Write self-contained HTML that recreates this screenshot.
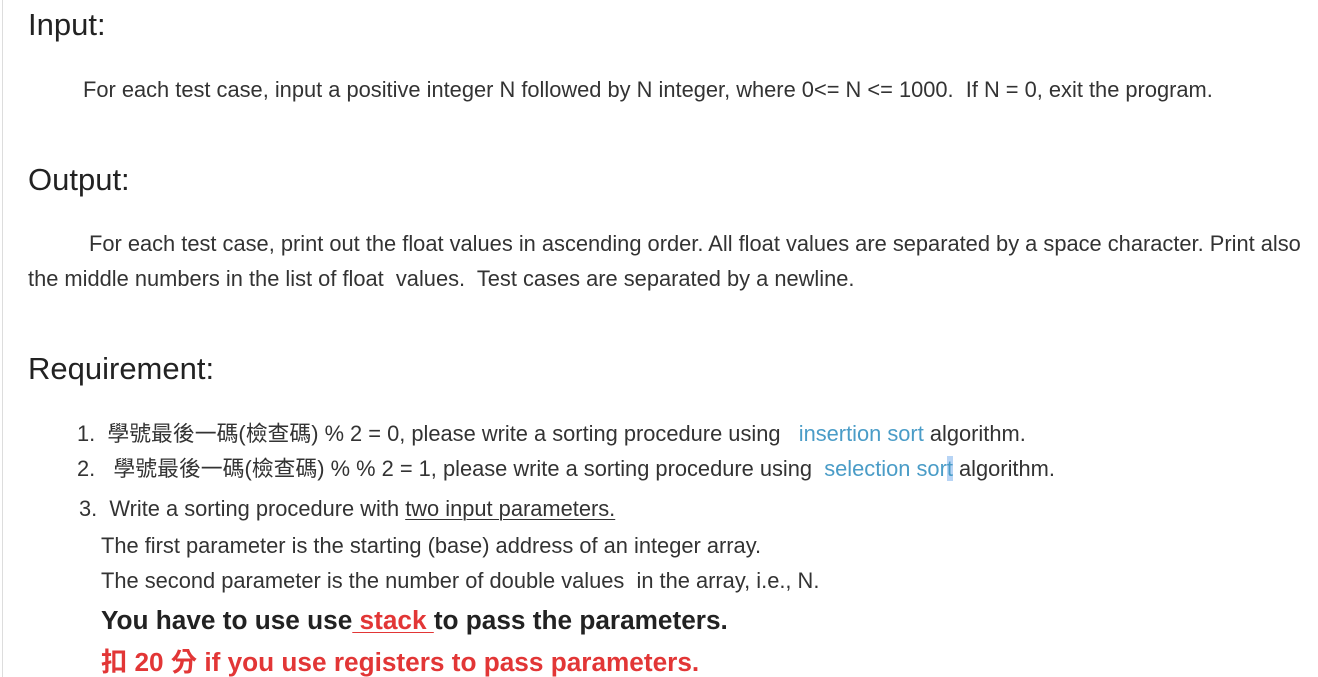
<!DOCTYPE html>
<html><head><meta charset="utf-8"><style>
body{margin:0;width:1318px;height:677px;overflow:hidden;background:#fff;font-family:"Liberation Sans","Noto Sans CJK TC",sans-serif;color:#333;position:relative}
.bl{position:absolute;left:2px;top:0;width:1px;height:677px;background:#ddd}
.t{position:absolute;white-space:nowrap;font-size:21.85px;line-height:26px}
.h{position:absolute;font-size:31px;line-height:36px;color:#222}
.b{color:#4a9cc7}
.r{color:#e23636}
u{text-decoration-thickness:1px;text-underline-offset:3px}
</style></head><body>
<div class="bl"></div>
<div class="h" style="left:28px;top:7px">Input:</div>
<div class="t" style="left:83px;top:77px">For each test case, input a positive integer N followed by N integer, where 0&lt;= N &lt;= 1000.&nbsp; If N = 0, exit the program.</div>
<div class="h" style="left:28px;top:162px">Output:</div>
<div class="t" style="left:89px;top:231px">For each test case, print out the float values in ascending order. All float values are separated by a space character. Print also</div>
<div class="t" style="left:28px;top:266px">the middle numbers in the list of float&nbsp; values.&nbsp; Test cases are separated by a newline.</div>
<div class="h" style="left:28px;top:351px">Requirement:</div>
<div class="t" style="left:77px;top:421px">1.&nbsp; 學號最後一碼(檢查碼) % 2 = 0, please write a sorting procedure using &nbsp; <span class="b">insertion sort</span> algorithm.</div>
<div class="t" style="left:77px;top:456px">2. &nbsp; 學號最後一碼(檢查碼) % % 2 = 1, please write a sorting procedure using &nbsp;<span class="b">selection sor<span style="background:#b7d4f5">t</span></span> algorithm.</div>
<div class="t" style="left:79px;top:496px">3.&nbsp; Write a sorting procedure with <u>two input parameters.</u></div>
<div class="t" style="left:101px;top:533px">The first parameter is the starting (base) address of an integer array.</div>
<div class="t" style="left:101px;top:568px">The second parameter is the number of double values&nbsp; in the array, i.e., N.</div>
<div class="t" style="left:101px;top:605px;font-size:26.2px;line-height:30px;font-weight:bold;color:#222">You have to use use<u class="r"> stack </u>to pass the parameters.</div>
<div class="t r" style="left:101px;top:647px;font-size:26.2px;line-height:30px;font-weight:bold">扣 20 分 if you use registers to pass parameters.</div>
</body></html>
